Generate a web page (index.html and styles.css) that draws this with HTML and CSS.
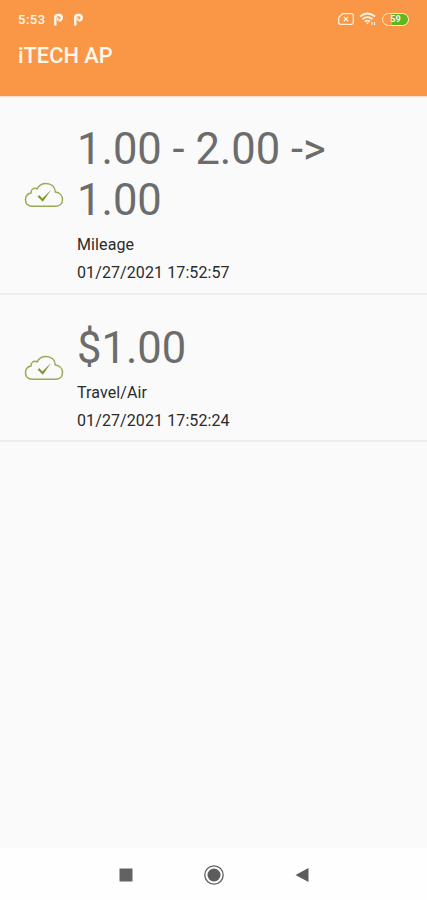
FILE: index.html
```html
<!DOCTYPE html>
<html lang="en">
<head>
    <meta charset="UTF-8">
    <meta name="viewport" content="width=device-width, initial-scale=1.0">
    <title>iTECH AP</title>
    <link rel="stylesheet" href="styles.css">
</head>
<body>
    <header class="header">
        <div class="status">
            <span class="time">5:53</span>
            <svg class="app" width="11" height="13" viewBox="0 0 11 13"><path d="M2.300 12.500V4.500Q2.300 2 5 2H6Q8.700 2 8.700 4.800T5.500 7.600" fill="none" stroke="#fff8ee" stroke-width="2.500"/><path d="M4.800 4.500v3" stroke="#fff8ee" stroke-width="1.300"/></svg>
            <svg class="app" width="11" height="13" viewBox="0 0 11 13"><path d="M2.300 12.500V4.500Q2.300 2 5 2H6Q8.700 2 8.700 4.800T5.500 7.600" fill="none" stroke="#fff8ee" stroke-width="2.500"/><path d="M4.800 4.500v3" stroke="#fff8ee" stroke-width="1.300"/></svg>
            <div class="status-icons">
                <svg width="16" height="12" viewBox="0 0 16 12" fill="none" stroke="#ffeeda" stroke-width="1.300"><path d="M4.500 .7H13.500Q15.300 .7 15.300 2.500V9.500Q15.300 11.300 13.500 11.300H2.500Q.7 11.300 .7 9.500V4.500Z"/><path d="M5.800 3.900l4.400 4.400M10.200 3.900L5.800 8.300"/></svg>
                <svg width="18" height="14" viewBox="0 0 18 14" fill="none" stroke="#fff3e3" stroke-width="1.700"><path d="M1 4.500Q8.500-1.500 16 4.500M3.500 7.200Q8.500 3.200 13.500 7.200M5.800 9.500Q8.500 7.600 11.200 9.500"/><path d="M7 10.500h3l-1.500 2z" fill="#fff3e3" stroke="none"/><path d="M13 10v3M15.500 10v3" stroke-width="1.200"/></svg>
                <div class="battery"><span class="level">59</span></div>
            </div>
        </div>
        <h1>iTECH AP</h1>
    </header>

    <main class="list">
        <div class="item">
            <svg class="cloud" width="40" height="26" viewBox="0 0 40 26"><path d="M8 24.200C4 24.200 1.500 21.500 1.500 18C1.500 14 4 11.500 7 11C6.800 7.500 9.500 5.300 13.200 6.700C15 3 18 1.500 22 1.500C27.500 1.500 31 5 31.300 10C35.500 10.500 38.500 13.500 38.500 17.500C38.500 21.500 36 24.200 32 24.200Z" fill="none" stroke="#98aa55" stroke-width="1.500"/><path d="M13.500 14.500L15.500 13.300L18.300 16.500L27 8L18.800 19.800Z" fill="#7d952e"/></svg>
            <div class="info">
                <div class="amount">1.00 - 2.00 -&gt; 1.00</div>
                <div class="detail">Mileage</div>
                <div class="detail">01/27/2021 17:52:57</div>
            </div>
        </div>
        <div class="item">
            <svg class="cloud" width="40" height="26" viewBox="0 0 40 26"><path d="M8 24.200C4 24.200 1.500 21.500 1.500 18C1.500 14 4 11.500 7 11C6.800 7.500 9.500 5.300 13.200 6.700C15 3 18 1.500 22 1.500C27.500 1.500 31 5 31.300 10C35.500 10.500 38.500 13.500 38.500 17.500C38.500 21.500 36 24.200 32 24.200Z" fill="none" stroke="#98aa55" stroke-width="1.500"/><path d="M13.500 14.500L15.500 13.300L18.300 16.500L27 8L18.800 19.800Z" fill="#7d952e"/></svg>
            <div class="info">
                <div class="amount">$1.00</div>
                <div class="detail">Travel/Air</div>
                <div class="detail">01/27/2021 17:52:24</div>
            </div>
        </div>
    </main>

    <nav class="navbar">
        <svg width="14" height="14" viewBox="0 0 14 14"><rect x=".5" y=".5" width="13" height="13" rx=".5" fill="#626262"/></svg>
        <svg width="20" height="20" viewBox="0 0 20 20"><circle cx="10" cy="10" r="9.200" fill="none" stroke="#626262" stroke-width="1.300"/><circle cx="10" cy="10" r="6.500" fill="#5c5c5c"/></svg>
        <svg width="14" height="14" viewBox="0 0 14 14"><path d="M13.500 0V14L.5 7Z" fill="#5c5c5c"/></svg>
    </nav>
</body>
</html>
```

FILE: styles.css
```css
* {
    box-sizing: border-box;
}
body {
    margin: 0;
    height: 900px;
    display: flex;
    flex-direction: column;
    font-family: Roboto, 'Liberation Sans', sans-serif;
    background: #fafafa;
}
.header {
    height: 96px;
    padding: 12px 18px 0;
    background: #f99746;
    color: #fff8ee;
    box-shadow: 0 1px 1px #f3ddd0;
}
.status {
    display: flex;
    align-items: center;
    height: 14px;
}
.time {
    width: 35px;
    font-size: 13px;
    font-weight: 500;
    letter-spacing: 0.5px;
}
.app {
    margin-right: 9px;
}
.status-icons {
    display: flex;
    align-items: center;
    gap: 5px;
    margin-left: auto;
}
.battery {
    width: 27px;
    height: 13px;
    border: 1.5px solid #ffeeda;
    border-radius: 7px;
    background: linear-gradient(to right, #f99746 35%, #62b51e 35%);
    text-align: center;
}
.level {
    display: block;
    color: #fff8ee;
    font-size: 9px;
    font-weight: bold;
    line-height: 11px;
}
h1 {
    margin: 16px 0 0;
    font-size: 21.8px;
    font-weight: 500;
    line-height: 28px;
}
.list {
    flex: 1;
}
.item {
    display: flex;
    align-items: center;
    padding: 28px 24px 6px;
    border-bottom: 2px solid #ededed;
}
.item:first-child {
    padding-bottom: 7px;
}
.cloud {
    flex: none;
    margin-right: 13px;
    margin-top: -21px;
}
.info {
    width: 270px;
}
.amount {
    margin-bottom: 5px;
    font-size: 43.5px;
    line-height: 51px;
    color: #6c6c6c;
}
.detail {
    font-size: 16px;
    letter-spacing: 0.1px;
    line-height: 27.5px;
    color: #2b2b2b;
}
.navbar {
    display: flex;
    align-items: center;
    justify-content: center;
    gap: 71px;
    height: 52px;
    padding-top: 2px;
    background: #fefefe;
}
```
